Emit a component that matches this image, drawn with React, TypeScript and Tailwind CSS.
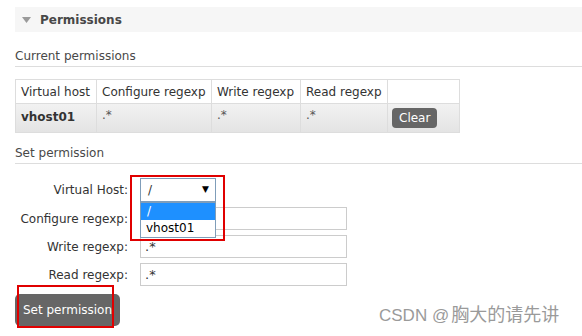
import React from "react";

export default function App() {
  const font = { fontFamily: '"DejaVu Sans", Verdana, sans-serif' };
  return (
    <div
      className="relative w-[582px] h-[336px] overflow-hidden bg-white text-[12px] text-[#333]"
      style={font}
    >
      <div className="pl-[15px] pt-[7px]">
        {/* Header bar */}
        <div className="flex h-[25px] items-center bg-[#f6f6f6]">
          <svg width="9" height="6" viewBox="0 0 9 6" className="ml-[7px]">
            <path d="M0 0 L9 0 L4.5 6 Z" fill="#9a9a9a" />
          </svg>
          <span className="ml-[9px] text-[12px] font-bold text-[#484848]">Permissions</span>
        </div>

        {/* Current permissions */}
        <div className="mt-[17px] border-b border-[#ddd] pb-[2px] leading-[15px] text-[#484848]">
          Current permissions
        </div>

        <table className="mt-[12px] border-collapse text-[12px]">
          <thead>
            <tr className="h-[24px]">
              <th className="w-[81px] border border-[#ddd] px-[5px] text-left font-normal">Virtual host</th>
              <th className="w-[115px] border border-[#ddd] px-[5px] text-left font-normal">Configure regexp</th>
              <th className="w-[89px] border border-[#ddd] px-[5px] text-left font-normal">Write regexp</th>
              <th className="w-[87px] border border-[#ddd] px-[5px] text-left font-normal">Read regexp</th>
              <th className="w-[72px] border border-[#ddd] px-[5px]"></th>
            </tr>
          </thead>
          <tbody>
            <tr className="h-[29px] bg-gradient-to-b from-[#f2f2f2] to-[#e3e3e3]">
              <td className="border border-[#ddd] px-[5px] align-top pt-[4px] font-bold">vhost01</td>
              <td className="border border-[#ddd] px-[5px] align-top pt-[2px] text-[#555]">.*</td>
              <td className="border border-[#ddd] px-[5px] align-top pt-[2px] text-[#555]">.*</td>
              <td className="border border-[#ddd] px-[5px] align-top pt-[2px] text-[#555]">.*</td>
              <td className="border border-[#ddd] px-[4px] align-middle">
                <button className="h-[20px] rounded-[4px] bg-[#666] px-[7px] text-[12px] leading-[20px] text-white">
                  Clear
                </button>
              </td>
            </tr>
          </tbody>
        </table>

        {/* Set permission */}
        <div className="mt-[13px] border-b border-[#ddd] pb-[2px] leading-[15px] text-[#484848]">
          Set permission
        </div>

        <div className="mt-[14px] grid grid-cols-[113px_207px] items-center gap-x-[12px] gap-y-[5px]">
          <div className="text-right">Virtual Host:</div>
          <div className="flex h-[24px] w-[76px] items-center justify-between border border-[#7f9db9] bg-white pl-[7px] pr-[6px]">
            <span>/</span>
            <span className="text-[9px] text-black">▼</span>
          </div>

          <div className="text-right">Configure regexp:</div>
          <div className="h-[23px] border border-[#ccc] bg-white px-[4px] leading-[21px]">.*</div>

          <div className="text-right">Write regexp:</div>
          <div className="h-[23px] border border-[#ccc] bg-white px-[4px] leading-[21px] text-[13px]">.*</div>

          <div className="text-right">Read regexp:</div>
          <div className="h-[23px] border border-[#ccc] bg-white px-[4px] leading-[21px] text-[13px]">.*</div>
        </div>

        <button className="mt-[8px] h-[32px] w-[105px] rounded-[5px] bg-[#666] text-[12px] text-white">
          Set permission
        </button>
      </div>

      {/* Dropdown overlay */}
      <div className="absolute left-[140px] top-[202px] w-[76px] border border-[#7f9db9] bg-white text-[12px]">
        <div className="h-[17px] bg-[#1e90ff] pl-[6px] leading-[17px] text-white">/</div>
        <div className="h-[17px] pl-[5px] leading-[17px] text-black">vhost01</div>
      </div>

      {/* Red annotation boxes */}
      <div className="absolute left-[130px] top-[175px] h-[66px] w-[95px] border-2 border-[#e00000]" />
      <div className="absolute left-[17px] top-[285px] h-[43px] w-[97px] border-2 border-[#e00000]" />

      {/* Watermark */}
      <div
        className="absolute left-[379px] top-[302px] flex items-baseline text-[17px] leading-[22px] text-[#9a9a9a]"
        style={{ fontFamily: '"Liberation Sans", "Noto Sans CJK SC", sans-serif' }}
      >
        <span>CSDN @</span>
        <span className="ml-[2px] text-[18px]" style={{ fontFamily: '"Noto Sans CJK SC", sans-serif' }}>
          胸大的请先讲
        </span>
      </div>
    </div>
  );
}
